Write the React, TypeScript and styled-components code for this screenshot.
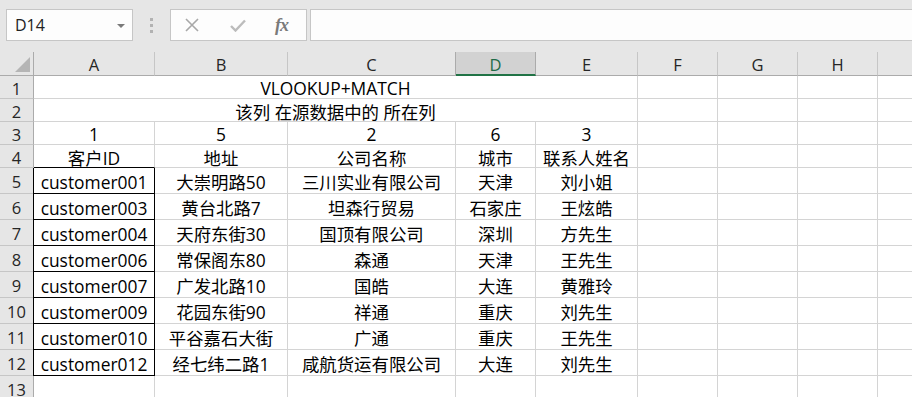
import React from "react";
import styled, { createGlobalStyle, css } from "styled-components";

const GlobalStyle = createGlobalStyle`
  html, body { margin: 0; padding: 0; background: #ffffff; overflow: hidden; }
  * { box-sizing: border-box; }
`;

const FONT = `"Open Sans", "Noto Sans CJK SC", sans-serif`;

const Page = styled.div`
  width: 912px;
  height: 397px;
  overflow: hidden;
  font-family: ${FONT};
  background: #ffffff;
`;

const FormulaBar = styled.div`
  height: 52px;
  background: #e6e6e6;
  display: flex;
  align-items: flex-start;
  padding: 9px 0 0 6px;
`;

const NameBox = styled.div`
  width: 127px;
  height: 32px;
  background: #fdfdfd;
  border: 1px solid #c6c6c6;
  display: flex;
  align-items: center;
  justify-content: space-between;
  padding: 0 7px 0 8px;
  font-size: 16px;
  color: #222;
`;

const Caret = styled.span`
  width: 0;
  height: 0;
  border-left: 4px solid transparent;
  border-right: 4px solid transparent;
  border-top: 4px solid #7a7a7a;
  margin-top: 1px;
`;

const Grip = styled.div`
  width: 37px;
  height: 32px;
  display: flex;
  flex-direction: column;
  align-items: center;
  justify-content: center;
  gap: 3px;
  & > span {
    width: 3px;
    height: 3px;
    background: #b2b2b2;
  }
`;

const FxButtons = styled.div`
  width: 137px;
  height: 32px;
  background: #fdfdfd;
  border: 1px solid #c6c6c6;
  display: flex;
  align-items: center;
  padding-left: 14px;
`;

const IconSlot = styled.div<{ $w: number }>`
  width: ${(p) => p.$w}px;
  height: 30px;
  display: flex;
  align-items: center;
  justify-content: flex-start;
`;

const FxText = styled.span`
  font-family: "Liberation Serif", "DejaVu Serif", serif;
  font-style: italic;
  font-weight: bold;
  font-size: 18px;
  color: #7a7a7a;
  letter-spacing: -1px;
`;

const FormulaInput = styled.div`
  flex: 1;
  height: 32px;
  margin-left: 3px;
  background: #fdfdfd;
  border: 1px solid #c6c6c6;
  border-right: none;
`;

const Sheet = styled.div`
  display: grid;
  grid-template-columns: 34px 121px 133px 168px 80px 102px 80px 80px 80px 80px;
  grid-template-rows: 24px 23px 23px 23px 23px repeat(9, 26px);
`;

const Corner = styled.div`
  background: #e6e6e6;
  border-right: 1px solid #ababab;
  border-bottom: 1px solid #ababab;
  position: relative;
  &::after {
    content: "";
    position: absolute;
    right: 3px;
    bottom: 3px;
    width: 0;
    height: 0;
    border-left: 15px solid transparent;
    border-bottom: 15px solid #b5b5b5;
  }
`;

const ColHeader = styled.div<{ $active?: boolean }>`
  background: #e6e6e6;
  border-right: 1px solid #c6c6c6;
  border-bottom: 1px solid #ababab;
  display: flex;
  align-items: center;
  justify-content: center;
  font-size: 16.5px;
  color: #262626;
  padding-top: 2px;
  ${(p) =>
    p.$active &&
    css`
      background: #d2d2d2;
      color: #1f6b48;
      border-right: 1px solid #ababab;
      border-bottom: 2px solid #217346;
      box-shadow: -1px 0 0 #ababab;
    `}
`;

const RowHeader = styled.div`
  background: #e6e6e6;
  border-right: 1px solid #ababab;
  border-bottom: 1px solid #c6c6c6;
  display: flex;
  align-items: center;
  justify-content: center;
  font-size: 16.5px;
  color: #262626;
  padding-top: 2px;
`;

const Cell = styled.div<{ $span?: number; $boxed?: boolean; $boxTop?: boolean }>`
  border-right: 1px solid #d4d4d4;
  border-bottom: 1px solid #d4d4d4;
  display: flex;
  align-items: center;
  justify-content: center;
  white-space: nowrap;
  font-size: 17.4px;
  color: #000;
  padding-top: 2px;
  overflow: visible;
  ${(p) => p.$span && css`grid-column: span ${p.$span};`}
  ${(p) =>
    p.$boxed &&
    css`
      border-right: 1px solid #000;
      border-bottom: 1px solid #000;
      box-shadow: -1px 0 0 #000;
    `}
  ${(p) => p.$boxTop && css`border-bottom: 1px solid #000;`}
`;

// Column I lies mostly off-screen; its letter is not visible in the view.
const COLS = ["A", "B", "C", "D", "E", "F", "G", "H", ""];

const DATA: string[][] = [
  ["customer001", "大崇明路50", "三川实业有限公司", "天津", "刘小姐"],
  ["customer003", "黄台北路7", "坦森行贸易", "石家庄", "王炫皓"],
  ["customer004", "天府东街30", "国顶有限公司", "深圳", "方先生"],
  ["customer006", "常保阁东80", "森通", "天津", "王先生"],
  ["customer007", "广发北路10", "国皓", "大连", "黄雅玲"],
  ["customer009", "花园东街90", "祥通", "重庆", "刘先生"],
  ["customer010", "平谷嘉石大街", "广通", "重庆", "王先生"],
  ["customer012", "经七纬二路1", "咸航货运有限公司", "大连", "刘先生"],
];

const Empties = ({ n }: { n: number }) => (
  <>
    {Array.from({ length: n }).map((_, i) => (
      <Cell key={i} />
    ))}
  </>
);

export default function App() {
  return (
    <Page>
      <GlobalStyle />
      <FormulaBar>
        <NameBox>
          <span>D14</span>
          <Caret />
        </NameBox>
        <Grip>
          <span />
          <span />
          <span />
        </Grip>
        <FxButtons>
          <IconSlot $w={45}>
            <svg width="14" height="14" viewBox="0 0 14 14">
              <path d="M1 1 L13 13 M13 1 L1 13" stroke="#a8a8a8" strokeWidth="1.6" fill="none" />
            </svg>
          </IconSlot>
          <IconSlot $w={45}>
            <svg width="16" height="13" viewBox="0 0 16 13">
              <path d="M1 7 L5.5 11.5 L15 1.5" stroke="#bcbcbc" strokeWidth="2.4" fill="none" />
            </svg>
          </IconSlot>
          <IconSlot $w={30}>
            <FxText>fx</FxText>
          </IconSlot>
        </FxButtons>
        <FormulaInput />
      </FormulaBar>
      <Sheet>
        <Corner />
        {COLS.map((c, i) => (
          <ColHeader key={i} $active={c === "D"}>
            {c}
          </ColHeader>
        ))}

        <RowHeader>1</RowHeader>
        <Cell $span={5}>VLOOKUP+MATCH</Cell>
        <Empties n={4} />

        <RowHeader>2</RowHeader>
        <Cell $span={5}>该列 在源数据中的 所在列</Cell>
        <Empties n={4} />

        <RowHeader>3</RowHeader>
        {["1", "5", "2", "6", "3"].map((v, i) => (
          <Cell key={i}>{v}</Cell>
        ))}
        <Empties n={4} />

        <RowHeader>4</RowHeader>
        {["客户ID", "地址", "公司名称", "城市", "联系人姓名"].map((v, i) => (
          <Cell key={i} $boxTop={i === 0}>
            {v}
          </Cell>
        ))}
        <Empties n={4} />

        {DATA.map((row, r) => (
          <React.Fragment key={r}>
            <RowHeader>{r + 5}</RowHeader>
            {row.map((v, i) => (
              <Cell key={i} $boxed={i === 0}>
                {v}
              </Cell>
            ))}
            <Empties n={4} />
          </React.Fragment>
        ))}

        <RowHeader>13</RowHeader>
        <Empties n={9} />
      </Sheet>
    </Page>
  );
}
